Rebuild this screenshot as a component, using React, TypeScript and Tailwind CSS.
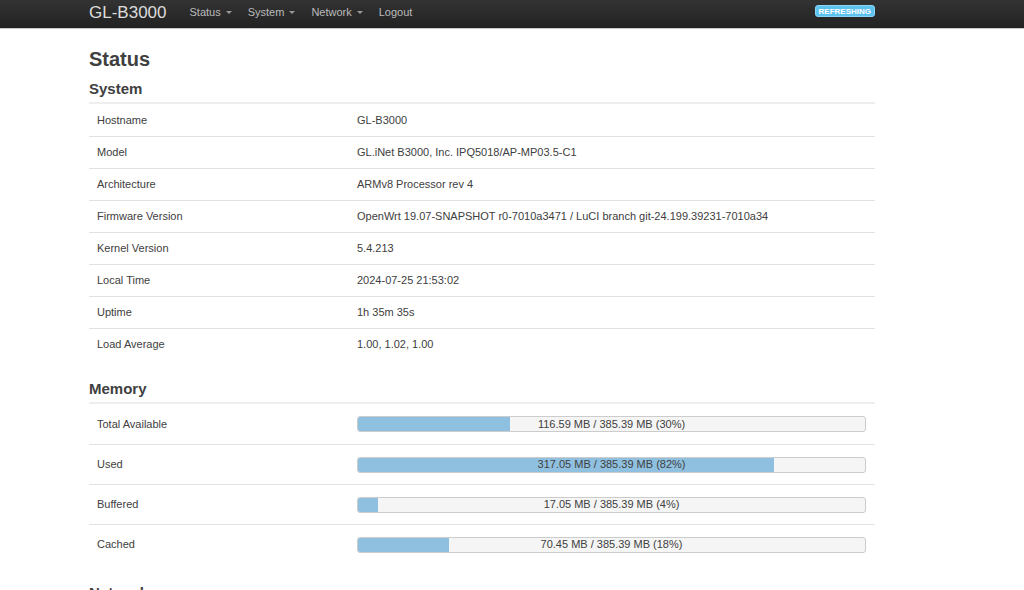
import React from "react";

const sys: [string, string][] = [
  ["Hostname", "GL-B3000"],
  ["Model", "GL.iNet B3000, Inc. IPQ5018/AP-MP03.5-C1"],
  ["Architecture", "ARMv8 Processor rev 4"],
  ["Firmware Version", "OpenWrt 19.07-SNAPSHOT r0-7010a3471 / LuCI branch git-24.199.39231-7010a34"],
  ["Kernel Version", "5.4.213"],
  ["Local Time", "2024-07-25 21:53:02"],
  ["Uptime", "1h 35m 35s"],
  ["Load Average", "1.00, 1.02, 1.00"],
];

const mem: [string, string, number][] = [
  ["Total Available", "116.59 MB / 385.39 MB (30%)", 30],
  ["Used", "317.05 MB / 385.39 MB (82%)", 82],
  ["Buffered", "17.05 MB / 385.39 MB (4%)", 4],
  ["Cached", "70.45 MB / 385.39 MB (18%)", 18],
];

function Caret() {
  return (
    <span className="inline-block ml-[5px] align-middle w-0 h-0 border-t-[3px] border-t-[#999] border-x-[3px] border-x-transparent" />
  );
}

export default function App() {
  return (
    <div
      className="w-[1024px] h-[590px] overflow-hidden bg-white text-[#404040]"
      style={{ fontFamily: '"Liberation Sans", Arial, sans-serif' }}
    >
      <div className="h-[28px] bg-gradient-to-b from-[#333333] to-[#222222] border-b border-[#c8c8c8] box-content">
        <div className="ml-[89px] w-[786px] h-[28px] pb-[4px] flex items-center">
          <span className="text-[17px] text-[#dddddd] leading-none">GL-B3000</span>
          <div className="flex items-center ml-[23px] gap-[16px] text-[11px] text-[#bbbbbb]">
            <span>
              Status
              <Caret />
            </span>
            <span>
              System
              <Caret />
            </span>
            <span>
              Network
              <Caret />
            </span>
            <span>Logout</span>
          </div>
          <span className="ml-auto mb-[2px] px-[3px] h-[12px] leading-[11px] rounded-[3px] bg-[#5ec2ef] border border-[#8ad6f7] text-white text-[8px] font-bold">
            REFRESHING
          </span>
        </div>
      </div>

      <div className="ml-[89px] w-[786px]">
        <h2 className="text-[20px] font-bold leading-[24px] mt-[18px]">Status</h2>
        <h3 className="text-[15px] font-bold leading-[18px] mt-[9px]">System</h3>
        <div className="mt-[4px] border-t-2 border-[#eeeeee]">
          {sys.map(([k, v], i) => (
            <div
              key={k}
              className={`flex h-[32px] items-center text-[11px] ${i > 0 ? "border-t border-[#e2e2e2]" : ""}`}
            >
              <div className="w-[268px] pl-[8px] shrink-0">{k}</div>
              <div>{v}</div>
            </div>
          ))}
        </div>

        <h3 className="text-[15px] font-bold leading-[18px] mt-[20px]">Memory</h3>
        <div className="mt-[4px] border-t-2 border-[#eeeeee]">
          {mem.map(([k, v, p], i) => (
            <div
              key={k}
              className={`flex h-[40px] items-center text-[11px] ${i > 0 ? "border-t border-[#e2e2e2]" : ""}`}
            >
              <div className="w-[268px] pl-[8px] shrink-0">{k}</div>
              <div className="relative w-[509px] h-[16px] rounded-[3px] border border-[#cccccc] bg-[#f5f5f5] overflow-hidden">
                <div className="h-full bg-[#8fc0e0]" style={{ width: `${p}%` }} />
                <div className="absolute inset-0 flex items-center justify-center leading-none">{v}</div>
              </div>
            </div>
          ))}
        </div>

        <h3 className="text-[15px] font-bold leading-[18px] mt-[20px]">Network</h3>
      </div>
    </div>
  );
}
